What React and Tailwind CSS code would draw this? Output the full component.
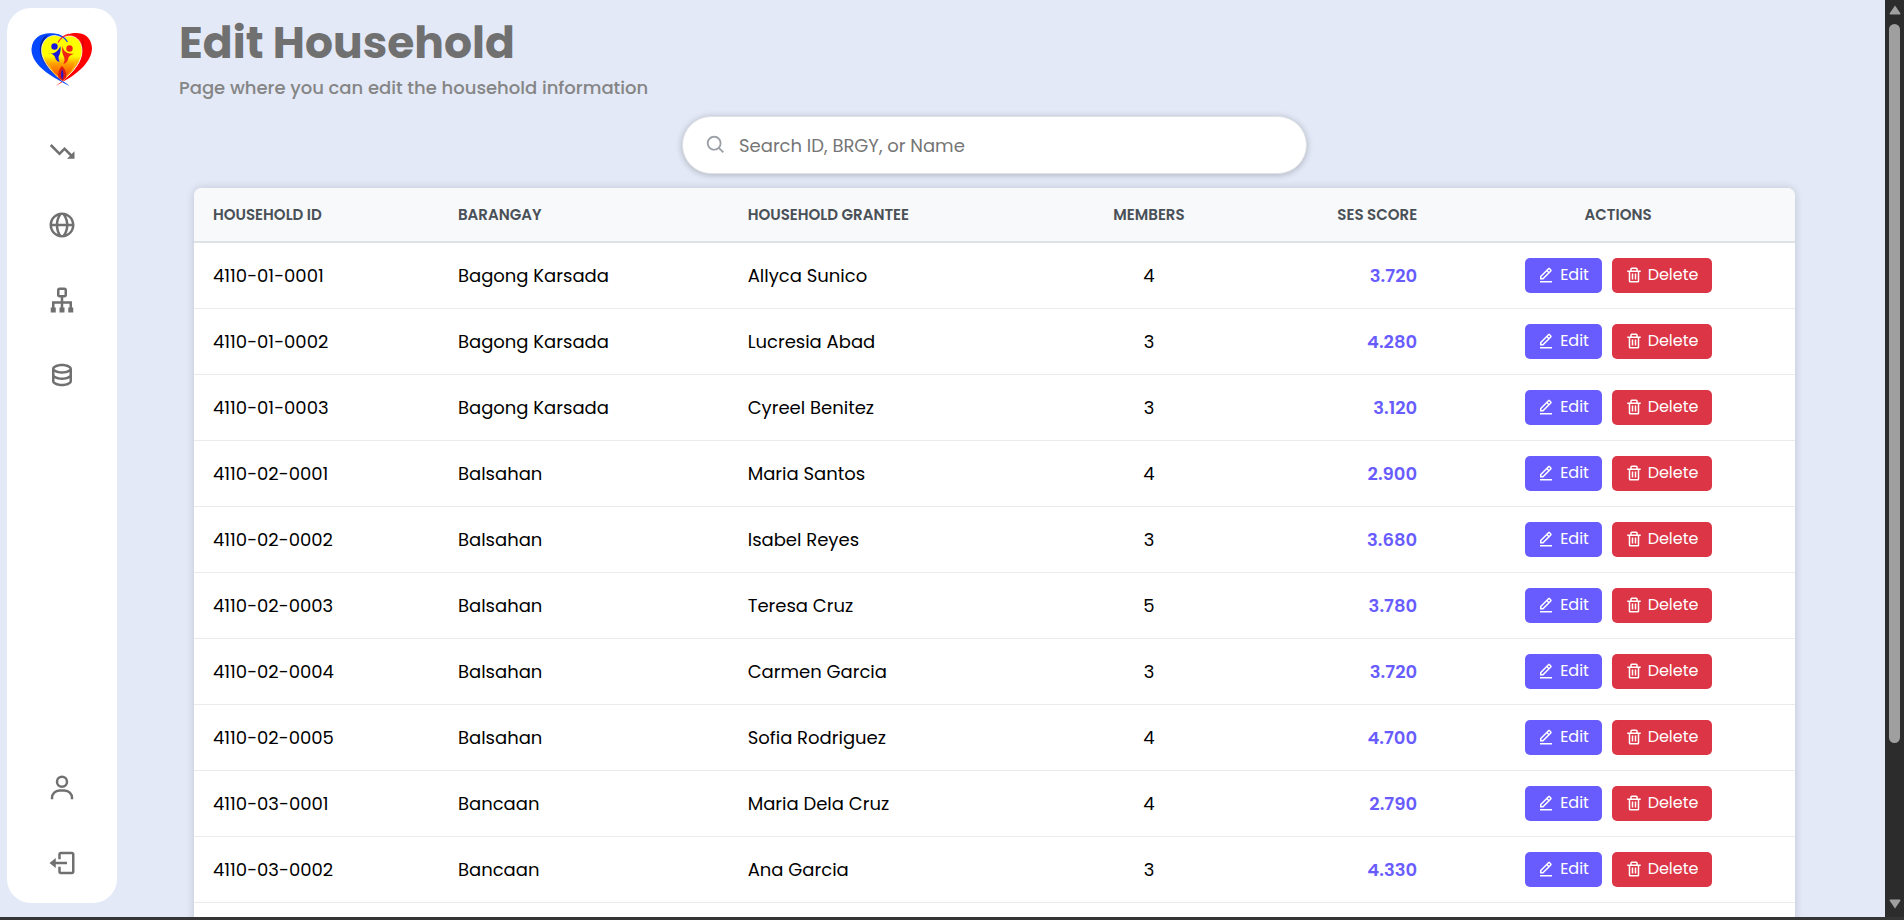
import React from "react";
import { BiTrendingDown, BiGlobe, BiSitemap, BiData, BiUser, BiLogOut, BiEditAlt, BiTrash, BiSearch } from "react-icons/bi";

const households = [
  ["4110-01-0001", "Bagong Karsada", "Allyca Sunico", 4, "3.720"],
  ["4110-01-0002", "Bagong Karsada", "Lucresia Abad", 3, "4.280"],
  ["4110-01-0003", "Bagong Karsada", "Cyreel Benitez", 3, "3.120"],
  ["4110-02-0001", "Balsahan", "Maria Santos", 4, "2.900"],
  ["4110-02-0002", "Balsahan", "Isabel Reyes", 3, "3.680"],
  ["4110-02-0003", "Balsahan", "Teresa Cruz", 5, "3.780"],
  ["4110-02-0004", "Balsahan", "Carmen Garcia", 3, "3.720"],
  ["4110-02-0005", "Balsahan", "Sofia Rodriguez", 4, "4.700"],
  ["4110-03-0001", "Bancaan", "Maria Dela Cruz", 4, "2.790"],
  ["4110-03-0002", "Bancaan", "Ana Garcia", 3, "4.330"],
];

function Logo() {
  return (
    <svg viewBox="0 0 62 56" className="h-14 w-[62px]" aria-hidden="true">
      <defs>
        <linearGradient id="flame" x1="0" y1="0" x2="0" y2="1">
          <stop offset="0.45" stopColor="#ffff00" />
          <stop offset="0.62" stopColor="#ffa000" />
          <stop offset="0.85" stopColor="#fb5a00" />
          <stop offset="1" stopColor="#f04000" />
        </linearGradient>
      </defs>
      <path d="M31.500 6C38-1 60-3 61 16c0 14-16 27-29.500 34-1.500.8-4 2.500-6.500 4 2-2 5-4 6.500-5C43 40 51 30 51 19 51 8 41 1 31.500 6z" fill="#ff0000" />
      <path d="M52 5c3 14-5 30-20 43 10-11 17-19 18-29z" fill="#b00010" opacity="0.600" />
      <path d="M36.500 9C28-2 2-3 0.500 17 0 31 17 43 31 50c2 1 5 3 7.500 4-2-2-5-4-7-5C19 40 10 29 10 19 10 8 22 1 36.500 9z" fill="#0648ff" />
      <path d="M19 2C11 4 8 12 9 20c1 9 10 20 22 29C19 39 11 28 11 19 11 10 14 5 19 2z" fill="#06229c" />
      <path d="M31.500 6.500C25 0 10.500 4 10.500 18.500c0 10 9.500 21 21 30.500C43 39 51 29 51 19 51 4 38 1 31.500 6.500z" fill="url(#flame)" stroke="#fff" strokeWidth="0.700" />
      <path d="M16 3c8-2.500 16 0 20.500 7" fill="none" stroke="#0648ff" strokeWidth="1.200" />
      <path d="M27 10.500C29 7 32 3.500 38 2" fill="none" stroke="#ff2020" strokeWidth="1.200" />
      <path d="M17 28c1 8 6 14 11 17M45 28c-1 8-6 14-11 17" fill="none" stroke="#ffc400" strokeWidth="1" />
      <circle cx="23.500" cy="14.500" r="3.200" fill="#1c18d8" />
      <path d="M17 21.500c6 1 10-2 12.500-7.500.5 5-.5 8-2 11 0 2 .5 3 1 5-3-1-4-2.500-4.500-5-1-2.500-3.500-3.500-7-3.500z" fill="#1c18d8" />
      <circle cx="38.500" cy="16.500" r="3.200" fill="#f02414" />
      <path d="M31.500 13.500c.5 6 5 9 12.500 8-5 1.500-6.500 3-7 6-.5 2.500-2 3.500-4.500 4.500 1-3 1.500-4 .5-7-1.500-3-2.500-6.500-1.500-11.500z" fill="#f02414" />
      <path d="M27.500 46c-1-5 .5-9 3.500-12 3 3 5 7 4 12l-3.500 3z" fill="#e01c0c" />
      <path d="M31.200 48c-1.700-4-1.500-7 0-11 1.500 4 1.700 7 0 11z" fill="#2418c8" />
    </svg>
  );
}

function NavLink({ icon: Icon, label }) {
  return (
    <a href="#" aria-label={label} className="flex h-[75px] w-full items-center justify-center text-[#707070]">
      <Icon className="size-[30px]" />
    </a>
  );
}

function Sidebar() {
  return (
    <aside className="mt-2 mb-[14px] ml-[7px] flex w-[110px] shrink-0 flex-col items-center rounded-3xl bg-white pt-6 pb-[3px]">
      <a href="#" aria-label="Home"><Logo /></a>
      <nav className="mt-6 flex w-full flex-1 flex-col">
        <NavLink icon={BiTrendingDown} label="Trends" />
        <NavLink icon={BiGlobe} label="Map" />
        <NavLink icon={BiSitemap} label="Hierarchy" />
        <NavLink icon={BiData} label="Data" />
        <div className="mt-auto">
          <NavLink icon={BiUser} label="Profile" />
          <NavLink icon={BiLogOut} label="Log out" />
        </div>
      </nav>
    </aside>
  );
}

function HouseholdTable() {
  return (
    <div className="mx-[15px] mt-[14px] overflow-hidden rounded-t-lg bg-white shadow-[0_0_8px_rgba(0,0,0,0.16)]">
      <table className="w-full table-fixed border-collapse text-left text-[18px] text-black">
        <colgroup>
          <col className="w-[15.3%]" />
          <col className="w-[18.1%]" />
          <col className="w-[20%]" />
          <col className="w-[12.5%]" />
          <col className="w-[12%]" />
          <col className="w-[22.1%]" />
        </colgroup>
        <thead>
          <tr className="h-[54px] border-b-2 border-[#dee2e6] bg-[#f8f9fa] text-[15px] text-[#495057] uppercase [&>th]:pt-[2px] [&>th]:font-semibold">
            <th className="pl-[19px]">Household ID</th>
            <th className="pl-[19px]">Barangay</th>
            <th className="pl-[19px]">Household Grantee</th>
            <th className="text-center">Members</th>
            <th className="pr-6 text-right">SES Score</th>
            <th className="text-center">Actions</th>
          </tr>
        </thead>
        <tbody>
          {households.map(([id, barangay, grantee, members, score]) => (
            <tr key={id} className="h-[66px] border-b border-[#ebebeb]">
              <td className="pl-[19px]">{id}</td>
              <td className="pl-[19px]">{barangay}</td>
              <td className="pl-[19px]">{grantee}</td>
              <td className="text-center">{members}</td>
              <td className="pr-6 text-right font-semibold text-[#695cfe]">{score}</td>
              <td>
                <div className="flex justify-center gap-[10px] text-[16px] text-white">
                  <button className="flex h-[35px] w-[77px] items-center justify-center gap-[5px] rounded-[5px] bg-[#695cfe]">
                    <BiEditAlt className="size-[18px]" />Edit
                  </button>
                  <button className="flex h-[35px] w-[100px] items-center justify-center gap-[5px] rounded-[5px] bg-[#dc3545]">
                    <BiTrash className="size-[18px]" />Delete
                  </button>
                </div>
              </td>
            </tr>
          ))}
          <tr className="h-[66px]"><td colSpan={6} /></tr>
        </tbody>
      </table>
    </div>
  );
}

function Scrollbar() {
  return (
    <div aria-hidden="true" className="flex w-[19px] shrink-0 flex-col items-center bg-[#2c2c2c] pt-[5px] pb-2">
      <svg viewBox="0 0 12 10" className="h-[10px] w-3"><path d="M6 0.500 11.500 8.500Q11.500 9.500 10.500 9.500H1.500Q0.500 9.500 0.500 8.500Z" fill="#9f9f9f" /></svg>
      <div className="mt-[9px] flex w-[11px] flex-1 flex-col">
        <div className="h-[82.2%] rounded-full bg-[#9f9f9f]" />
      </div>
      <svg viewBox="0 0 12 10" className="h-[10px] w-3"><path d="M6 9.500 0.500 1.500Q0.500 0.500 1.500 0.500H10.500Q11.500 0.500 11.500 1.500Z" fill="#9f9f9f" /></svg>
    </div>
  );
}

export default function App() {
  return (
    <div className="flex h-screen overflow-hidden border-b-[3px] border-[#353535] bg-[#e3e9f7] font-['Poppins','Inter',sans-serif]">
      <Sidebar />
      <main className="min-w-0 flex-1 overflow-hidden pr-[75px] pl-[62px]">
        <h1 className="mt-[13px] text-[44px] leading-[60px] font-bold text-[#707070]">Edit Household</h1>
        <p className="text-[18px] leading-[30px] font-medium text-[#858585]">Page where you can edit the household information</p>
        <label className="mx-auto mt-[13px] flex h-[58px] w-full max-w-[625px] items-center gap-3 rounded-full border border-[#dfe1e5] bg-white px-[22px] shadow-[0_1px_6px_rgba(32,33,36,0.28)]">
          <BiSearch className="size-[22px] shrink-0 text-[#9aa0a6]" />
          <input type="text" aria-label="Search households" placeholder="Search ID, BRGY, or Name" className="min-w-0 flex-1 bg-transparent text-[18px] outline-none placeholder:text-[#757575]" />
        </label>
        <HouseholdTable />
      </main>
      <Scrollbar />
    </div>
  );
}
